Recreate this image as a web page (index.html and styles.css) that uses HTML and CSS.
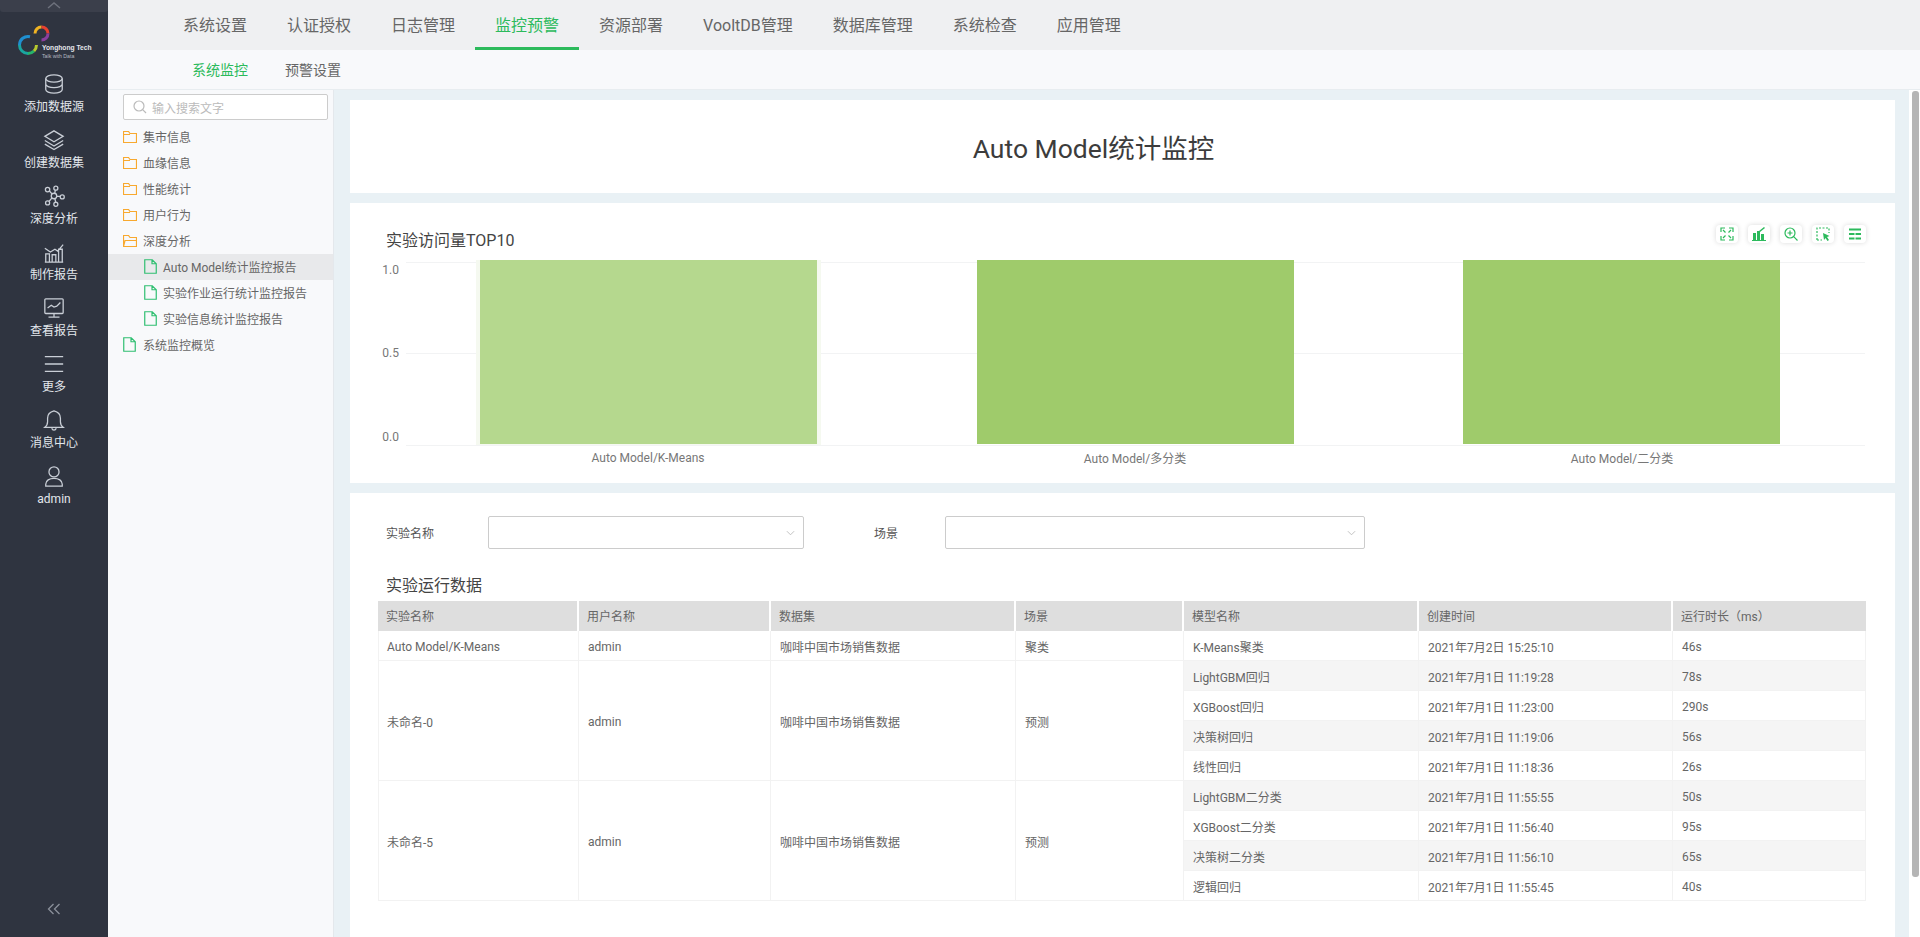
FILE: index.html
```html
<!DOCTYPE html>
<html lang="zh-CN">
<head>
  <meta charset="UTF-8" />
  <title>Auto Model统计监控</title>
  <link rel="stylesheet" href="styles.css">
</head>
<body>
  <aside class="sidebar">
    <div class="side-top">
      <svg width="16" height="7" viewBox="0 0 16 7"><path d="M2 6l6-5 6 5" /></svg>
    </div>
    <div class="logo">
      <svg class="logo-mark" width="32" height="31" viewBox="0 0 32 31" fill="none" stroke-width="3">
        <path d="M12 11.700A8.500 8.500 0 0 0 1.500 20" stroke="#1f8fd0" />
        <path d="M1.500 20A8.500 8.500 0 0 0 10 28.500" stroke="#1aa6a0" />
        <path d="M10 28.500A8.500 8.500 0 0 0 16 26" stroke="#27b36a" />
        <path d="M16 26A8.500 8.500 0 0 0 18.500 20" stroke="#b6c92e" />
        <path d="M17 8.500A6.500 6.500 0 0 1 23.500 2" stroke="#f0b323" />
        <path d="M23.500 2A6.500 6.500 0 0 1 30 8.500" stroke="#e8402f" />
        <path d="M30 8.500A6.500 6.500 0 0 1 23.500 15" stroke="#8a3f9e" />
      </svg>
      <div class="logo-text">
        <span class="logo-name">Yonghong Tech</span>
        <span class="logo-slogan">Talk with Data</span>
      </div>
    </div>
    <nav class="side-menu">
      <a class="side-item">
        <svg viewBox="0 0 24 24"><ellipse cx="12" cy="6" rx="9" ry="4" /><path d="M3 6v12c0 2.200 4 4 9 4s9-1.800 9-4V6M3 12c0 2.200 4 4 9 4s9-1.800 9-4" /></svg>
        <span>添加数据源</span>
      </a>
      <a class="side-item">
        <svg viewBox="0 0 24 24"><path d="M12 2l10 6-10 6L2 8zM2 12.500l10 6 10-6M2 16.500l10 6 10-6" /></svg>
        <span>创建数据集</span>
      </a>
      <a class="side-item">
        <svg viewBox="0 0 24 24"><circle cx="12" cy="12" r="3" /><circle cx="5" cy="5" r="2.400" /><circle cx="14" cy="3.500" r="2.200" /><circle cx="21" cy="13" r="2.200" /><circle cx="14" cy="21" r="2.200" /><circle cx="5" cy="19.500" r="2.200" /><path d="M7 6.500l3 3.500M13.500 5.500L12.800 9M15 12.500h3.800M13 15l.8 3.800M9.800 14L6.500 18" /></svg>
        <span>深度分析</span>
      </a>
      <a class="side-item">
        <svg viewBox="0 0 24 24"><path d="M2 23h20M3 23V14h4v9M10 23v-8h4v8M17 23V9h4v14M2 8l6 4 5-3 3 2 6-7" /></svg>
        <span>制作报告</span>
      </a>
      <a class="side-item">
        <svg viewBox="0 0 24 24"><rect x="2" y="2" width="20" height="16" rx="1" /><path d="M5 12l4-3 3 2 3-1 4-4M12 18v4M6 22h12" /></svg>
        <span>查看报告</span>
      </a>
      <a class="side-item">
        <svg viewBox="0 0 24 24"><path d="M2 4h20M2 12h20M2 20h20" /></svg>
        <span>更多</span>
      </a>
      <a class="side-item">
        <svg viewBox="0 0 24 24"><path d="M2 20c2-1.500 3-3 3-6V10c0-4 3-7 7-8 4 1 7 4 7 8v4c0 3 1 4.500 3 6zM9.500 21c.5 1.300 1.400 2 2.500 2s2-.7 2.500-2" /></svg>
        <span>消息中心</span>
      </a>
      <a class="side-item">
        <svg viewBox="0 0 24 24"><circle cx="12" cy="7.500" r="5.500" /><path d="M3 23v-2c0-4 4-6.500 9-6.500s9 2.500 9 6.500v2z" /></svg>
        <span>admin</span>
      </a>
    </nav>
    <div class="side-collapse">
      <svg width="14" height="12" viewBox="0 0 14 12"><path d="M6.500 1L1.500 6l5 5M12.500 1l-5 5 5 5" /></svg>
    </div>
  </aside>

  <div class="main">
    <header class="top-nav">
      <a class="top-tab">系统设置</a>
      <a class="top-tab">认证授权</a>
      <a class="top-tab">日志管理</a>
      <a class="top-tab active">监控预警</a>
      <a class="top-tab">资源部署</a>
      <a class="top-tab">VooltDB管理</a>
      <a class="top-tab">数据库管理</a>
      <a class="top-tab">系统检查</a>
      <a class="top-tab">应用管理</a>
    </header>
    <div class="sub-nav">
      <a class="sub-tab active">系统监控</a>
      <a class="sub-tab">预警设置</a>
    </div>

    <div class="work">
      <section class="tree">
        <div class="search">
          <svg width="14" height="14" viewBox="0 0 14 14"><circle cx="6" cy="6" r="5" /><path d="M9.700 9.700L13 13" /></svg>
          <span>输入搜索文字</span>
        </div>
        <ul class="tree-list">
          <li class="tree-row"><svg class="folder" viewBox="0 0 14 12"><path d="M.5 11.500V.5h5l1.500 2h6.500v9zM.5 3.500h6.500" /></svg>集市信息</li>
          <li class="tree-row"><svg class="folder" viewBox="0 0 14 12"><path d="M.5 11.500V.5h5l1.500 2h6.500v9zM.5 3.500h6.500" /></svg>血缘信息</li>
          <li class="tree-row"><svg class="folder" viewBox="0 0 14 12"><path d="M.5 11.500V.5h5l1.500 2h6.500v9zM.5 3.500h6.500" /></svg>性能统计</li>
          <li class="tree-row"><svg class="folder" viewBox="0 0 14 12"><path d="M.5 11.500V.5h5l1.500 2h6.500v9zM.5 3.500h6.500" /></svg>用户行为</li>
          <li class="tree-row"><svg class="folder" viewBox="0 0 14 12"><path d="M.5 11.500V.5h5l1.500 2h6.500v3M.5 11.500l1.500-6h11.500v6z" /></svg>深度分析</li>
          <li class="tree-row child selected"><svg class="doc" viewBox="0 0 13 15"><path d="M.75.75h7.500l4 4v9.500H.75zM8 .75v4h4.250" /></svg>Auto Model统计监控报告</li>
          <li class="tree-row child"><svg class="doc" viewBox="0 0 13 15"><path d="M.75.75h7.500l4 4v9.500H.75zM8 .75v4h4.250" /></svg>实验作业运行统计监控报告</li>
          <li class="tree-row child"><svg class="doc" viewBox="0 0 13 15"><path d="M.75.75h7.500l4 4v9.500H.75zM8 .75v4h4.250" /></svg>实验信息统计监控报告</li>
          <li class="tree-row leaf"><svg class="doc" viewBox="0 0 13 15"><path d="M.75.75h7.500l4 4v9.500H.75zM8 .75v4h4.250" /></svg>系统监控概览</li>
        </ul>
      </section>

      <section class="content">
        <div class="card title-card">Auto Model统计监控</div>

        <div class="card chart-card">
          <div class="chart-head">
            <h2 class="block-title">实验访问量TOP10</h2>
            <div class="tools">
              <button class="tool"><svg viewBox="0 0 14 14"><path d="M1 5V1h4M9 1h4v4M13 9v4H9M5 13H1V9M3 3l2.500 2.500M11 3L8.500 5.500M11 11L8.500 8.500M3 11l2.500-2.500" /></svg></button>
              <button class="tool"><svg viewBox="0 0 14 14"><path class="solid" d="M1 13V6h3v7zM5 13V4h3v9zM9 13V7h3v6zM0 13h14v1H0zM7 4l5-4 1 1-5 4z" /></svg></button>
              <button class="tool"><svg viewBox="0 0 14 14"><circle cx="6" cy="6" r="5" /><path d="M3.500 6h5M6 3.500v5M9.700 9.700L13.500 13.500" /></svg></button>
              <button class="tool"><svg viewBox="0 0 14 14"><path stroke-dasharray="2 1.500" d="M1 13V1h12v5M1 13h5" /><path class="solid" d="M7 6l6.500 3-2.500 1 2 3-1.500 1-2-3-1.500 2z" /></svg></button>
              <button class="tool"><svg viewBox="0 0 14 14"><path class="solid" d="M1 1.500h12v2H1zM1 6h5.500v2H1zM7.500 6H13v2H7.500zM1 10.500h5.500v2H1zM7.500 10.500H13v2H7.500z" /></svg></button>
            </div>
          </div>
          <svg class="plot" width="1545" height="223" viewBox="0 0 1545 223">
            <g class="grid">
              <path d="M56 2.500H1515M56 93.500H1515M56 185.500H1515" />
            </g>
            <rect x="126" y="0" width="345" height="185" fill="#f5f9f0" />
            <rect x="130" y="0" width="337" height="184" fill="#b5d88e" />
            <rect x="627" y="0" width="317" height="184" fill="#9fcb6b" />
            <rect x="1113" y="0" width="317" height="184" fill="#9fcb6b" />
            <g class="y-labels">
              <text x="49" y="14">1.0</text>
              <text x="49" y="97">0.5</text>
              <text x="49" y="181">0.0</text>
            </g>
            <g class="x-labels">
              <text x="298" y="202">Auto Model/K-Means</text>
              <text x="785" y="203">Auto Model/多分类</text>
              <text x="1272" y="203">Auto Model/二分类</text>
            </g>
          </svg>
        </div>

        <div class="card table-card">
          <div class="filters">
            <label class="filter-label name-label">实验名称</label>
            <div class="select name-select"><svg viewBox="0 0 10 6"><path d="M1 1l4 4 4-4" /></svg></div>
            <label class="filter-label scene-label">场景</label>
            <div class="select scene-select"><svg viewBox="0 0 10 6"><path d="M1 1l4 4 4-4" /></svg></div>
          </div>
          <h2 class="block-title table-title">实验运行数据</h2>
          <table class="data">
            <colgroup>
              <col class="c1"><col class="c2"><col class="c3"><col class="c4"><col class="c5"><col class="c6"><col class="c7">
            </colgroup>
            <thead>
              <tr><th>实验名称</th><th>用户名称</th><th>数据集</th><th>场景</th><th>模型名称</th><th>创建时间</th><th>运行时长（ms）</th></tr>
            </thead>
            <tbody>
              <tr><td>Auto Model/K-Means</td><td>admin</td><td>咖啡中国市场销售数据</td><td>聚类</td><td>K-Means聚类</td><td>2021年7月2日 15:25:10</td><td>46s</td></tr>
              <tr class="odd"><td rowspan="4" class="span">未命名-0</td><td rowspan="4" class="span">admin</td><td rowspan="4" class="span">咖啡中国市场销售数据</td><td rowspan="4" class="span">预测</td><td>LightGBM回归</td><td>2021年7月1日 11:19:28</td><td>78s</td></tr>
              <tr><td>XGBoost回归</td><td>2021年7月1日 11:23:00</td><td>290s</td></tr>
              <tr class="odd"><td>决策树回归</td><td>2021年7月1日 11:19:06</td><td>56s</td></tr>
              <tr><td>线性回归</td><td>2021年7月1日 11:18:36</td><td>26s</td></tr>
              <tr class="odd"><td rowspan="4" class="span">未命名-5</td><td rowspan="4" class="span">admin</td><td rowspan="4" class="span">咖啡中国市场销售数据</td><td rowspan="4" class="span">预测</td><td>LightGBM二分类</td><td>2021年7月1日 11:55:55</td><td>50s</td></tr>
              <tr><td>XGBoost二分类</td><td>2021年7月1日 11:56:40</td><td>95s</td></tr>
              <tr class="odd"><td>决策树二分类</td><td>2021年7月1日 11:56:10</td><td>65s</td></tr>
              <tr><td>逻辑回归</td><td>2021年7月1日 11:55:45</td><td>40s</td></tr>
            </tbody>
          </table>
        </div>
      </section>

      <div class="scrollbar"><div class="thumb"></div></div>
    </div>
  </div>
</body>
</html>
```

FILE: styles.css
```css
:root {
  --side: #2f3440;
  --side-icon: #c9ced6;
  --green: #2cba5c;
  --page: #e9f1f5;
  --text: #666;
}

* {
  box-sizing: border-box;
}

html, body {
  height: 100%;
}

body {
  margin: 0;
  display: flex;
  overflow: hidden;
  font-family: Roboto, "Noto Sans CJK SC", sans-serif;
  font-size: 12px;
  color: var(--text);
  background: var(--page);
}

/* 左侧菜单 */
.sidebar {
  width: 108px;
  flex: none;
  display: flex;
  flex-direction: column;
  background: var(--side);
}

.side-top {
  height: 12px;
  background: #3b3f4b;
  border-radius: 0 0 3px 3px;
  display: flex;
  justify-content: center;
  align-items: flex-start;
  padding-top: 2px;
}

.side-top svg path {
  fill: none;
  stroke: #6d717c;
  stroke-width: 1.5;
}

.logo {
  height: 60px;
  padding: 13px 0 0 18px;
  position: relative;
}

.logo-text {
  position: absolute;
  left: 42px;
  top: 31px;
  display: flex;
  flex-direction: column;
  white-space: nowrap;
}

.logo-name {
  font-family: "Liberation Sans", sans-serif;
  font-size: 6.700px;
  line-height: 9px;
  font-weight: 700;
  color: #e4e6ea;
}

.logo-slogan {
  font-family: "Liberation Sans", sans-serif;
  font-size: 5.200px;
  line-height: 8px;
  color: #b4b8c0;
}

.side-menu {
  display: flex;
  flex-direction: column;
}

.side-item {
  height: 56px;
  display: flex;
  flex-direction: column;
  align-items: center;
  color: #e3e7ec;
}

.side-item svg {
  width: 22px;
  height: 22px;
  margin-top: 1px;
  fill: none;
  stroke: var(--side-icon);
  stroke-width: 1.400;
}

.side-item span {
  margin-top: 3px;
  line-height: 18px;
}

.side-collapse {
  margin-top: auto;
  height: 34px;
  display: flex;
  justify-content: center;
}

.side-collapse svg path {
  fill: none;
  stroke: #8b909a;
  stroke-width: 1.300;
}

/* 顶部导航 */
.main {
  flex: 1;
  min-width: 0;
  display: flex;
  flex-direction: column;
}

.top-nav {
  height: 50px;
  flex: none;
  display: flex;
  padding-left: 55px;
  background: #eff0f2;
}

.top-tab {
  padding: 1px 20px 0;
  font-size: 16px;
  line-height: 50px;
  color: #666;
  white-space: nowrap;
}

.top-tab.active {
  color: var(--green);
  box-shadow: inset 0 -3px 0 var(--green);
}

.sub-nav {
  height: 40px;
  flex: none;
  display: flex;
  gap: 37px;
  padding-left: 84px;
  background: #f8f9fb;
  border-bottom: 1px solid #e8edf0;
}

.sub-tab {
  padding-top: 1px;
  font-size: 14px;
  line-height: 39px;
  color: #666;
}

.sub-tab.active {
  color: var(--green);
}

.work {
  flex: 1;
  min-height: 0;
  display: flex;
}

/* 报告树 */
.tree {
  width: 226px;
  flex: none;
  padding-top: 4px;
  background: #f8f9fb;
  border-right: 1px solid #e4e8ec;
}

.search {
  height: 26px;
  margin: 0 5px 0 15px;
  padding-left: 9px;
  display: flex;
  align-items: center;
  gap: 5px;
  color: #bbb;
  background: #fff;
  border: 1px solid #ccc;
  border-radius: 2px;
}

.search svg {
  fill: none;
  stroke: #bbb;
  stroke-width: 1.200;
}

.tree-list {
  list-style: none;
  margin: 4px 0 0;
  padding: 0;
}

.tree-row {
  height: 26px;
  display: flex;
  align-items: center;
  gap: 6px;
  padding: 0 0 1px 15px;
  white-space: nowrap;
}

.tree-row.child {
  padding-left: 36px;
}

.tree-row.leaf {
  gap: 7px;
}

.tree-row.selected {
  background: #e8e9eb;
}

.folder {
  width: 14px;
  height: 12px;
  fill: none;
  stroke: #f8a92f;
  stroke-width: 1.200;
}

.doc {
  width: 13px;
  height: 15px;
  fill: none;
  stroke: #2fbf71;
  stroke-width: 1.200;
}

/* 内容 */
.content {
  flex: 1;
  min-width: 0;
  padding: 10px 14px 0 16px;
  overflow: hidden;
}

.card {
  background: #fff;
  margin-bottom: 10px;
}

.title-card {
  height: 93px;
  display: flex;
  align-items: center;
  justify-content: center;
  padding-right: 58px;
  font-size: 26.500px;
  color: #3c3c3c;
}

.chart-card {
  height: 280px;
}

.chart-head {
  height: 57px;
  display: flex;
  justify-content: space-between;
  padding: 22px 29px 0 36px;
}

.block-title {
  margin: 0;
  font-size: 16px;
  font-weight: 400;
  line-height: 24px;
  color: #444;
}

.chart-head .block-title {
  margin-top: 4px;
}

.tools {
  display: flex;
  gap: 10px;
}

.tool {
  width: 22px;
  height: 18px;
  padding: 0;
  display: flex;
  align-items: center;
  justify-content: center;
  background: #fff;
  border: none;
  border-radius: 4px;
  box-shadow: 0 0 5px rgba(0, 0, 0, 0.15);
}

.tool svg {
  width: 14px;
  height: 14px;
  fill: none;
  stroke: var(--green);
  stroke-width: 1.200;
}

.tool .solid {
  fill: var(--green);
  stroke: none;
}

.plot {
  display: block;
}

.grid path {
  fill: none;
  stroke: #f2f3f4;
}

.plot text {
  font-family: Roboto, "Noto Sans CJK SC", sans-serif;
  font-size: 12px;
  fill: #777;
}

.y-labels text {
  text-anchor: end;
}

.x-labels text {
  text-anchor: middle;
}

.table-card {
  height: 600px;
  padding: 23px 30px 0 28px;
}

.filters {
  display: flex;
  align-items: center;
  height: 33px;
}

.filter-label {
  color: #555;
}

.name-label {
  margin-left: 8px;
  width: 102px;
}

.scene-label {
  width: 71px;
  margin-left: 70px;
}

.select {
  height: 33px;
  display: flex;
  align-items: center;
  justify-content: flex-end;
  padding-right: 8px;
  border: 1px solid #ccc;
  border-radius: 2px;
}

.select svg {
  width: 9px;
  height: 6px;
  fill: none;
  stroke: #bbb;
}

.name-select {
  width: 316px;
}

.scene-select {
  width: 420px;
}

.table-title {
  margin: 25px 0 0 8px;
}

.data {
  width: 1488px;
  table-layout: fixed;
  border-collapse: separate;
  border-spacing: 0;
  margin-top: 3px;
}

.c1 { width: 201px; }
.c2 { width: 192px; }
.c3 { width: 245px; }
.c4 { width: 168px; }
.c5 { width: 235px; }
.c6 { width: 254px; }
.c7 { width: 193px; }

.data th {
  height: 30px;
  padding: 0 8px 2px;
  text-align: left;
  font-weight: 400;
  color: #666;
  background: #dedede;
  border-right: 2px solid #fff;
}

.data th:last-child {
  border-right: none;
}

.data td {
  height: 30px;
  padding: 2px 9px 0;
  white-space: nowrap;
  color: #666;
  border-right: 1px solid #f2f2f2;
  border-bottom: 1px solid #f2f2f2;
}

.data tbody tr:first-child td:first-child,
.data td[rowspan]:first-child {
  padding-left: 8px;
  border-left: 1px solid #f2f2f2;
}

.data tr.odd td {
  background: #f5f5f5;
}

.data tr.odd td.span {
  background: #fff;
}

/* 滚动条 */
.scrollbar {
  width: 11px;
  flex: none;
  padding: 1px 1px 0 3px;
  background: #fff;
}

.thumb {
  height: 786px;
  background: #b5b5b5;
  border-radius: 3px;
}
```
